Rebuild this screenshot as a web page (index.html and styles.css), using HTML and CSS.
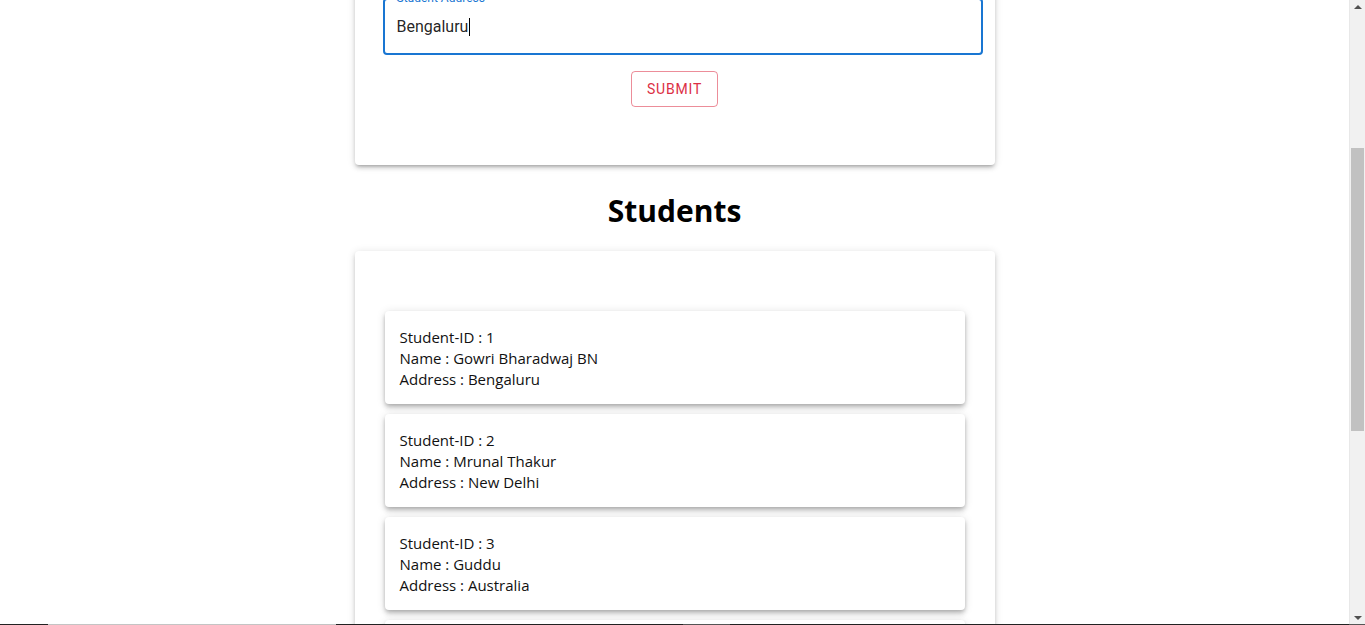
FILE: index.html
```html
<!DOCTYPE html>
<html lang="en">
<head>
<meta charset="utf-8">
<title>Students</title>
<link rel="stylesheet" href="styles.css">
</head>
<body>
<div class="screen">
  <div class="viewport">
    <div class="page">
      <div class="card form-card">
        <div class="field">
          <label class="field-label">Student Address</label>
          <div class="field-input"><span class="value">Bengaluru</span><span class="caret"></span></div>
        </div>
        <div class="actions">
          <button class="btn-outline" type="button">Submit</button>
        </div>
      </div>

      <h1 class="title">Students</h1>

      <div class="card list-card">
        <div class="student">
          <div>Student-ID : 1</div>
          <div>Name : Gowri Bharadwaj BN</div>
          <div>Address : Bengaluru</div>
        </div>
        <div class="student">
          <div>Student-ID : 2</div>
          <div>Name : Mrunal Thakur</div>
          <div>Address : New Delhi</div>
        </div>
        <div class="student">
          <div>Student-ID : 3</div>
          <div>Name : Guddu</div>
          <div>Address : Australia</div>
        </div>
        <div class="student"></div>
      </div>
    </div>
  </div>
  <div class="scrollbar">
    <div class="arrow arrow-up"></div>
    <div class="track">
      <div class="thumb"></div>
    </div>
    <div class="arrow arrow-down"></div>
  </div>
</div>
<div class="taskline">
  <span class="seg dark w48"></span>
  <span class="seg light w288"></span>
  <span class="seg dark w347"></span>
  <span class="seg mid w47"></span>
  <span class="seg dark fill"></span>
  <span class="seg mid w16"></span>
</div>
</body>
</html>
```

FILE: styles.css
```css
* { box-sizing: border-box; }

html, body {
  margin: 0;
  padding: 0;
  height: 625px;
  overflow: hidden;
  background: #ffffff;
}

body {
  display: flex;
  flex-direction: column;
  font-family: "Segoe UI", "Open Sans", "Noto Sans", sans-serif;
  color: #000;
}

.screen {
  display: flex;
  height: 624px;
}

.viewport {
  flex: 1;
  overflow: hidden;
}

.page {
  width: 640px;
  margin: -30px auto 0;
}

.card {
  background: #fff;
  border-radius: 4px;
  box-shadow: 0px 3px 3px -2px rgba(0,0,0,0.2), 0px 3px 4px 0px rgba(0,0,0,0.14), 0px 1px 8px 0px rgba(0,0,0,0.12);
}

.form-card {
  padding: 28px 12px 58px 28px;
}

.field {
  position: relative;
  width: 600px;
}

.field-label {
  position: absolute;
  left: 14px;
  top: -8px;
  padding: 0 3px 0 0;
  background: #fff;
  font-family: Roboto, "Liberation Sans", sans-serif;
  font-size: 12px;
  line-height: 16px;
  color: #1976d2;
}

.field-input {
  height: 57px;
  border: 2px solid #1976d2;
  border-radius: 4px;
  padding: 0 12px;
  display: flex;
  align-items: center;
  font-family: Roboto, "Liberation Sans", sans-serif;
  font-size: 16px;
  color: rgba(0,0,0,0.87);
}

.caret {
  display: inline-block;
  width: 1px;
  height: 18px;
  background: #000;
  margin-left: 1px;
}

.actions {
  display: flex;
  justify-content: center;
  padding-top: 16px;
  margin-left: -16px;
  width: 616px;
}

.btn-outline {
  font-family: Roboto, "Liberation Sans", sans-serif;
  font-size: 14px;
  font-weight: 400;
  letter-spacing: 0.8px;
  text-transform: uppercase;
  color: #dc2f45;
  background: transparent;
  border: 1px solid rgba(220,47,69,0.55);
  border-radius: 4px;
  padding: 5px 15px;
  line-height: 24px;
  height: 36px;
  cursor: pointer;
}

.title {
  margin: 0;
  padding: 26px 0 20px;
  text-align: center;
  font-size: 30px;
  font-weight: 700;
  line-height: 40px;
}

.list-card {
  padding: 60px 30px 20px;
  display: flex;
  flex-direction: column;
  gap: 10px;
}

.student {
  padding: 16px 15px 14px;
  min-height: 93px;
  border-radius: 4px;
  background: #fff;
  font-size: 15px;
  line-height: 21px;
  color: #111;
  box-shadow: 0px 2px 4px -1px rgba(0,0,0,0.2), 0px 4px 5px 0px rgba(0,0,0,0.14), 0px 1px 10px 0px rgba(0,0,0,0.12);
}

.scrollbar {
  width: 16px;
  background: #f1f1f1;
  display: flex;
  flex-direction: column;
  border-left: 1px solid #e8e8e8;
}

.arrow {
  height: 16px;
  display: flex;
  align-items: center;
  justify-content: center;
}

.arrow-up::before {
  content: "";
  border-left: 4px solid transparent;
  border-right: 4px solid transparent;
  border-bottom: 4px solid #505050;
  margin-top: -2px;
}

.arrow-down::before {
  content: "";
  border-left: 4px solid transparent;
  border-right: 4px solid transparent;
  border-top: 4px solid #505050;
  margin-top: 4px;
}

.track {
  flex: 1;
  padding: 132px 1px 0 1px;
}

.thumb {
  height: 283px;
  background: #c1c1c1;
}

.taskline {
  display: flex;
  height: 1px;
}

.seg { display: block; height: 1px; }
.dark { background: #222; }
.light { background: #c4c4c4; }
.mid { background: #555; }
.w48 { width: 48px; }
.w288 { width: 288px; }
.w347 { width: 347px; }
.w47 { width: 47px; }
.w16 { width: 16px; }
.fill { flex: 1; }
```
